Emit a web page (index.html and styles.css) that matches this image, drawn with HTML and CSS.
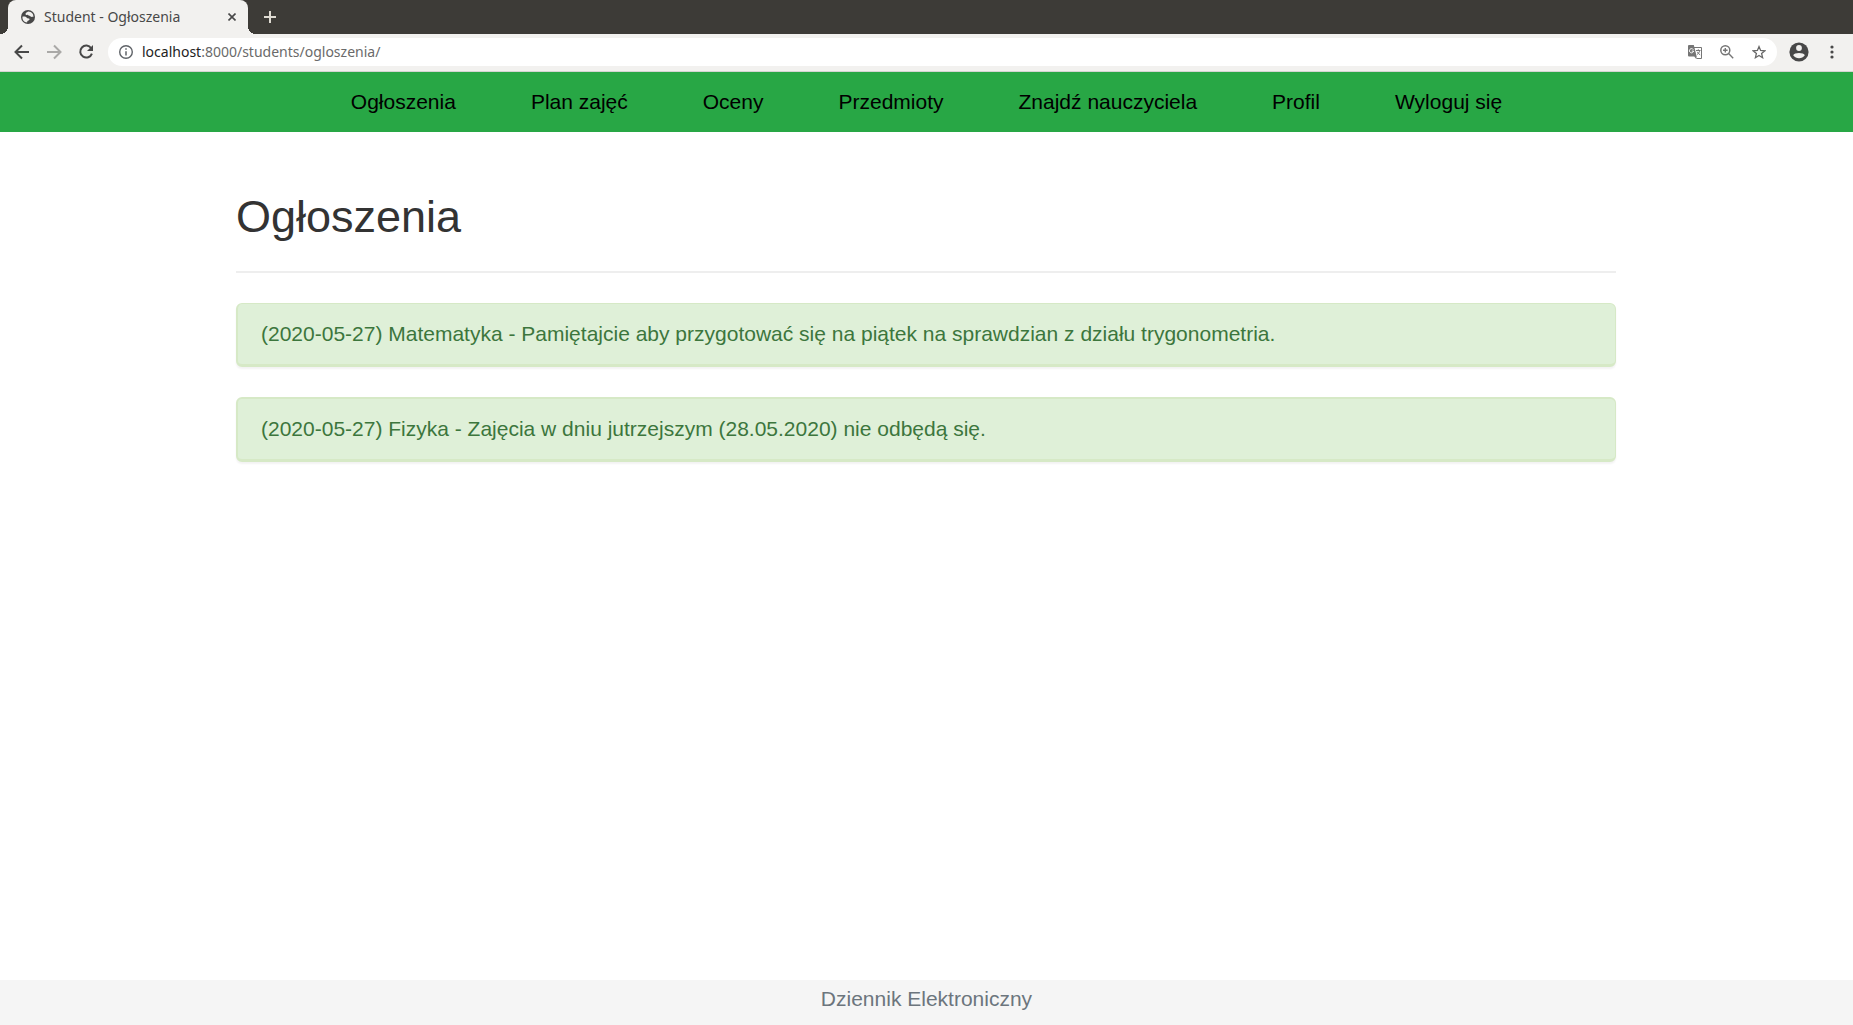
FILE: index.html
```html
<!DOCTYPE html>
<html lang="pl">
<head>
<meta charset="utf-8">
<meta name="viewport" content="width=device-width, initial-scale=1">
<title>Student - Ogłoszenia</title>
<link rel="stylesheet" href="styles.css">
</head>
<body>
<div class="browser">
  <div class="tab-strip">
    <div class="tab">
      <svg class="tab-icon" viewBox="0 0 14 14"><circle cx="7" cy="7" r="7" fill="#484848"/><path d="M7.400 1.500C6.800 2 5 2.400 4.600 3.600c-.3 1 .3 1.600 1.300 1.300.9-.3.900.6 1.900.7 1.200.1 1.600 1.300 2.700 1.300.8 0 1.200-.3 2-.2A5.600 5.600 0 0 0 7.400 1.500ZM1.400 6.700c1.700-.2 3.700-.1 4.300 1 .4.900 1.900.3 2.700 1.100.7.900-.8 1.700-1.500 2-.7.300-.6 1-.8 1.700A5.600 5.600 0 0 1 1.400 6.700Z" fill="#f2f1ef"/></svg>
      <span class="tab-title">Student - Ogłoszenia</span>
      <button class="icon-button" type="button" aria-label="Zamknij kartę"><svg width="8" height="8" viewBox="0 0 8 8"><path d="M.5.5l7 7M7.500.5l-7 7" stroke="#484848" stroke-width="1.600"/></svg></button>
    </div>
    <button class="icon-button new-tab" type="button" aria-label="Nowa karta"><svg width="12" height="12" viewBox="0 0 12 12"><path d="M6 0v12M0 6h12" stroke="#dfdbd2" stroke-width="2"/></svg></button>
  </div>
  <div class="toolbar">
    <div class="history">
      <button class="icon-button" type="button" aria-label="Wstecz"><svg width="16" height="16" viewBox="0 0 16 16"><path d="M15 8H2M8 1.500L1.500 8 8 14.500" fill="none" stroke="#484848" stroke-width="2"/></svg></button>
      <button class="icon-button" type="button" aria-label="Dalej" disabled><svg width="16" height="16" viewBox="0 0 16 16"><path d="M1 8h13M8 1.500L14.500 8 8 14.500" fill="none" stroke="#aaa9a7" stroke-width="2"/></svg></button>
      <button class="icon-button" type="button" aria-label="Odśwież"><svg width="16" height="16" viewBox="0 0 16 16"><path d="M13.200 4.200A6 6 0 1 0 13.900 9.600" fill="none" stroke="#484848" stroke-width="2"/><path d="M15 1v6H9z" fill="#484848"/></svg></button>
    </div>
    <div class="address">
      <svg width="14" height="14" viewBox="0 0 14 14"><circle cx="7" cy="7" r="6.300" fill="none" stroke="#5f6368" stroke-width="1.400"/><path d="M7 6.200v4.300M7 3.300v1.500" stroke="#5f6368" stroke-width="1.500"/></svg>
      <a class="url" href="#"><span class="url-host">localhost</span>:8000/students/ogloszenia/</a>
      <div class="address-actions">
        <button class="icon-button" type="button" aria-label="Przetłumacz stronę"><svg width="14" height="14" viewBox="0 0 14 14"><path d="M6 2.500h7.500v11H8.500" fill="#fff" stroke="#757575"/><path d="M8 5.500h4.500M10.300 4.300v1.200M11.700 5.500c-.4 2-1.400 3.100-2.500 4M9.300 6.800c.6 1.300 1.500 2.200 2.900 3" fill="none" stroke="#757575"/><path d="M1 0h4.800l2.900 11.500H1q-1 0-1-1V1q0-1 1-1zM6.300 11.500h2.400L8.200 14z" fill="#757575"/><path d="M5.300 4.600A2.100 2.100 0 1 0 5.600 6.100H3.800" fill="none" stroke="#fff"/></svg></button>
        <button class="icon-button" type="button" aria-label="Powiększenie"><svg width="14" height="14" viewBox="0 0 14 14"><circle cx="5.300" cy="5.300" r="4.500" fill="none" stroke="#757575" stroke-width="1.500"/><path d="M8.600 8.600l4.600 4.600M5.300 3v4.600M3 5.300h4.600" fill="none" stroke="#757575" stroke-width="1.400"/></svg></button>
        <button class="icon-button" type="button" aria-label="Dodaj zakładkę"><svg width="14" height="14" viewBox="0 0 14 14"><path d="M7 1.600l1.600 3.800 4.200.4-3.200 2.700 1 4.200L7 10.500l-3.600 2.200 1-4.200-3.200-2.700 4.200-.4z" fill="none" stroke="#686868" stroke-width="1.300"/></svg></button>
      </div>
    </div>
    <button class="icon-button profile" type="button" aria-label="Użytkownik"><svg width="20" height="20" viewBox="0 0 20 20"><circle cx="10" cy="10" r="9.600" fill="#484848"/><circle cx="10" cy="6" r="2.900" fill="#f2f1ef"/><path d="M4.200 13.200c1-3 10.600-3 11.600 0-2.600 4-9 4-11.600 0z" fill="#f2f1ef"/></svg></button>
    <button class="icon-button menu" type="button" aria-label="Menu"><svg width="4" height="14" viewBox="0 0 4 14"><g fill="#484848"><circle cx="2" cy="2" r="1.600"/><circle cx="2" cy="7" r="1.600"/><circle cx="2" cy="12" r="1.600"/></g></svg></button>
  </div>
</div>
<nav class="site-nav">
  <a href="#">Ogłoszenia</a>
  <a href="#">Plan zajęć</a>
  <a href="#">Oceny</a>
  <a href="#">Przedmioty</a>
  <a href="#">Znajdź nauczyciela</a>
  <a href="#">Profil</a>
  <a href="#">Wyloguj się</a>
</nav>
<main class="container">
  <h1>Ogłoszenia</h1>
  <div class="notice">(2020-05-27) Matematyka - Pamiętajcie aby przygotować się na piątek na sprawdzian z działu trygonometria.</div>
  <div class="notice">(2020-05-27) Fizyka - Zajęcia w dniu jutrzejszym (28.05.2020) nie odbędą się.</div>
</main>
<footer class="site-footer">Dziennik Elektroniczny</footer>
</body>
</html>
```
FILE: styles.css
```css
* { box-sizing: border-box; }

body {
  margin: 0;
  min-height: 100vh;
  display: flex;
  flex-direction: column;
  background: #fff;
  color: #333;
  font: 21px/30px "Liberation Sans", Arial, sans-serif;
}

a { color: inherit; text-decoration: none; }
svg { display: block; }

.icon-button {
  display: flex;
  padding: 0;
  border: 0;
  background: none;
}

/* Browser window */
.browser {
  font: 14px/20px "Noto Sans", sans-serif;
}

.tab-strip {
  display: flex;
  align-items: center;
  height: 34px;
  padding-left: 8px;
  background: #3d3b37;
}

.tab {
  position: relative;
  display: flex;
  align-items: center;
  width: 240px;
  height: 34px;
  padding: 0 12px 0 13px;
  border-radius: 8px 8px 0 0;
  background: #f2f1ef;
  color: #484848;
}

.tab::before,
.tab::after {
  content: "";
  position: absolute;
  bottom: 0;
  width: 8px;
  height: 8px;
}

.tab::before {
  right: 100%;
  background: radial-gradient(circle at 0 0, transparent 8px, #f2f1ef 8px);
}

.tab::after {
  left: 100%;
  background: radial-gradient(circle at 100% 0, transparent 8px, #f2f1ef 8px);
}

.tab-icon { width: 14px; height: 14px; margin-right: 9px; }
.tab-title { flex: 1; white-space: nowrap; }
.new-tab { margin-left: 16px; }

.toolbar {
  display: flex;
  align-items: center;
  height: 38px;
  padding: 0 19px 1px 14px;
  border-bottom: 1px solid #d5d4d2;
  background: #f2f1ef;
}

.history { display: flex; gap: 16px; margin-right: 14px; }

.address {
  flex: 1;
  display: flex;
  align-items: center;
  height: 28px;
  padding: 0 11px;
  border-radius: 14px;
  background: #fff;
}

.url { flex: 1; margin-left: 9px; color: #6a6a6a; }
.url-host { color: #222; }
.address-actions { display: flex; gap: 18px; }
.profile { margin-left: 12px; }
.menu { margin-left: 21px; }

/* Page */
.site-nav {
  display: flex;
  flex-wrap: wrap;
  justify-content: center;
  column-gap: 75px;
  padding: 15px;
  background: #28a745;
  color: #000;
}

.container {
  flex: 1;
  width: 100%;
  max-width: 1425px;
  margin: 0 auto;
  padding: 60px 23px 30px 22px;
}

h1 {
  margin: 0 0 30px;
  padding-bottom: 29px;
  border-bottom: 2px solid #eee;
  font-size: 45px;
  font-weight: 400;
  line-height: 50px;
}

.notice {
  margin-bottom: 30px;
  padding: 15px 23px;
  border: solid #d6e9c6;
  border-width: 1px 1px 3px 2px;
  border-radius: 6px;
  background: #dff0d8;
  color: #3c763d;
  box-shadow: 0 2px 2px rgba(0, 0, 0, 0.05);
}

.notice + .notice { border-top-width: 2px; }

.site-footer {
  padding: 4px 15px 11px;
  background: #f5f5f5;
  color: #6c757d;
  text-align: center;
}
```
